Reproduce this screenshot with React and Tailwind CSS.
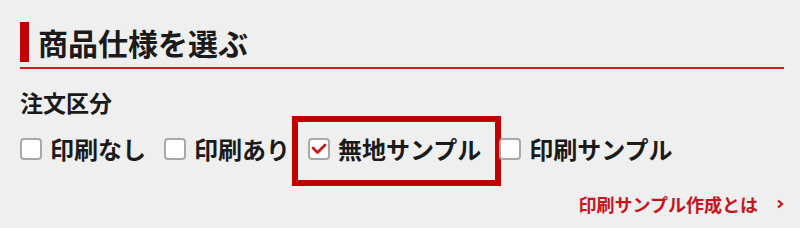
import React from "react";

function Box({ checked }) {
  return (
    <span className="flex h-[22px] w-[22px] shrink-0 items-center justify-center rounded-[4px] border-2 border-[#a8a8a8] bg-white">
      {checked && (
        <svg width="16" height="12" viewBox="0 0 16 12">
          <path d="M2 5 L6.5 9.5 L14 2" fill="none" stroke="#d0141c" strokeWidth="2.8" strokeLinecap="round" strokeLinejoin="round" />
        </svg>
      )}
    </span>
  );
}

function Option({ label, checked, highlight }) {
  return (
    <div className="relative flex h-[30px] items-center gap-2">
      <Box checked={checked} />
      <span className="text-[24px] font-bold leading-[30px] text-[#1a1a1a]">{label}</span>
      {highlight && (
        <span className="pointer-events-none absolute -left-4 -right-5 -top-[18px] -bottom-[22px] border-[6px] border-[#c20000]" />
      )}
    </div>
  );
}

export default function App() {
  return (
    <div
      className="h-[228px] w-[800px] overflow-hidden bg-[#efefef] pl-5 pr-4 pt-[22px]"
      style={{ fontFamily: '"Noto Sans CJK JP", "Noto Sans", sans-serif' }}
    >
      <div className="flex items-center border-b-2 border-[#cc1f1f] pb-[5px]">
        <span className="h-[40px] w-[9px] bg-[#c20000]" />
        <h2 className="ml-[9px] text-[30px] font-bold leading-[40px] text-[#1a1a1a]">商品仕様を選ぶ</h2>
      </div>
      <div className="mt-[18px] text-[23px] font-bold leading-[30px] text-[#1a1a1a]">注文区分</div>
      <div className="mt-[17px] flex items-center gap-[18px]">
        <Option label="印刷なし" />
        <Option label="印刷あり" />
        <Option label="無地サンプル" checked highlight />
        <Option label="印刷サンプル" />
      </div>
      <div className="mt-[28px] flex justify-end">
        <a className="flex items-center gap-[18px] text-[18px] font-bold leading-[24px] text-[#c8141c]">
          印刷サンプル作成とは
          <svg width="8" height="10" viewBox="0 0 8 10">
            <path d="M2 1.5 L6 5 L2 8.5" fill="none" stroke="#c8141c" strokeWidth="2.2" />
          </svg>
        </a>
      </div>
    </div>
  );
}
